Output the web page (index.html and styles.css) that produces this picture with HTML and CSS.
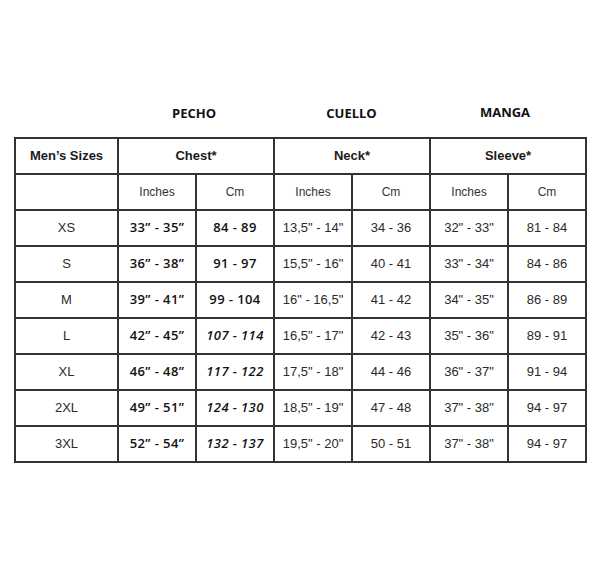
FILE: index.html
```html
<!DOCTYPE html>
<html>
<head>
<meta charset="utf-8">
<link rel="stylesheet" href="styles.css">
</head>
<body>
<div class="page">
  <div class="titles">
    <div class="spacer"></div>
    <div class="title">PECHO</div>
    <div class="title">CUELLO</div>
    <div class="title manga">MANGA</div>
  </div>
  <table class="sizes">
    <colgroup>
      <col class="c-size"><col class="c-val"><col class="c-val"><col class="c-val"><col class="c-val"><col class="c-val"><col class="c-val">
    </colgroup>
    <thead>
      <tr class="head">
        <th>Men’s Sizes</th>
        <th colspan="2">Chest*</th>
        <th colspan="2">Neck*</th>
        <th colspan="2">Sleeve*</th>
      </tr>
      <tr class="sub">
        <td></td>
        <td>Inches</td><td>Cm</td>
        <td>Inches</td><td>Cm</td>
        <td>Inches</td><td>Cm</td>
      </tr>
    </thead>
    <tbody>
      <tr><td>XS</td><td class="chest">33” - 35”</td><td class="chest">84 - 89</td><td>13,5" - 14"</td><td>34 - 36</td><td>32" - 33"</td><td>81 - 84</td></tr>
      <tr><td>S</td><td class="chest">36” - 38”</td><td class="chest">91 - 97</td><td>15,5" - 16"</td><td>40 - 41</td><td>33" - 34"</td><td>84 - 86</td></tr>
      <tr><td>M</td><td class="chest">39” - 41”</td><td class="chest">99 - 104</td><td>16" - 16,5"</td><td>41 - 42</td><td>34" - 35"</td><td>86 - 89</td></tr>
      <tr><td>L</td><td class="chest">42” - 45”</td><td class="chest it">107 - 114</td><td>16,5" - 17"</td><td>42 - 43</td><td>35" - 36"</td><td>89 - 91</td></tr>
      <tr><td>XL</td><td class="chest">46” - 48”</td><td class="chest it">117 - 122</td><td>17,5" - 18"</td><td>44 - 46</td><td>36" - 37"</td><td>91 - 94</td></tr>
      <tr><td>2XL</td><td class="chest">49” - 51”</td><td class="chest it">124 - 130</td><td>18,5" - 19"</td><td>47 - 48</td><td>37" - 38"</td><td>94 - 97</td></tr>
      <tr><td>3XL</td><td class="chest">52” - 54”</td><td class="chest it">132 - 137</td><td>19,5" - 20"</td><td>50 - 51</td><td>37" - 38"</td><td>94 - 97</td></tr>
    </tbody>
  </table>
</div>
</body>
</html>
```
FILE: styles.css
```css
html, body {
  margin: 0;
  padding: 0;
  background: #ffffff;
}
.page {
  width: 600px;
  height: 578px;
  padding-top: 104px;
  box-sizing: border-box;
  font-family: "Liberation Sans", Arial, sans-serif;
  color: #2a2a2a;
}
.titles {
  display: grid;
  grid-template-columns: 103px 156px 157px 156px;
  margin-left: 15px;
  height: 19px;
  margin-bottom: 14px;
}
.title {
  font-family: "Open Sans", sans-serif;
  font-weight: 700;
  font-size: 13px;
  line-height: 19px;
  color: #111;
  text-align: center;
}
.title:nth-child(2) { padding-right: 4px; }
.title:nth-child(3) { padding-right: 2px; }
.manga {
  padding-right: 8px;
  margin-top: -1px;
}
.sizes {
  border-collapse: collapse;
  table-layout: fixed;
  width: 573px;
  margin-left: 14px;
}
.c-size { width: 103px; }
.c-val { width: 78px; }
.sizes tr {
  height: 36px;
}
.sizes th,
.sizes td {
  border: 2px solid #333;
  padding: 0;
  line-height: 16px;
  text-align: center;
  vertical-align: middle;
}
.sizes th {
  font-size: 13px;
  font-weight: 700;
  color: #1a1a1a;
}
.sizes td {
  font-size: 13px;
}
.sub td {
  font-size: 12px;
  color: #333;
}
.sizes td.chest {
  font-family: "Open Sans", sans-serif;
  font-weight: 600;
  font-size: 13px;
  letter-spacing: 0.4px;
  color: #111;
  padding-bottom: 2px;
}
.sizes td.it {
  font-style: italic;
}
```
